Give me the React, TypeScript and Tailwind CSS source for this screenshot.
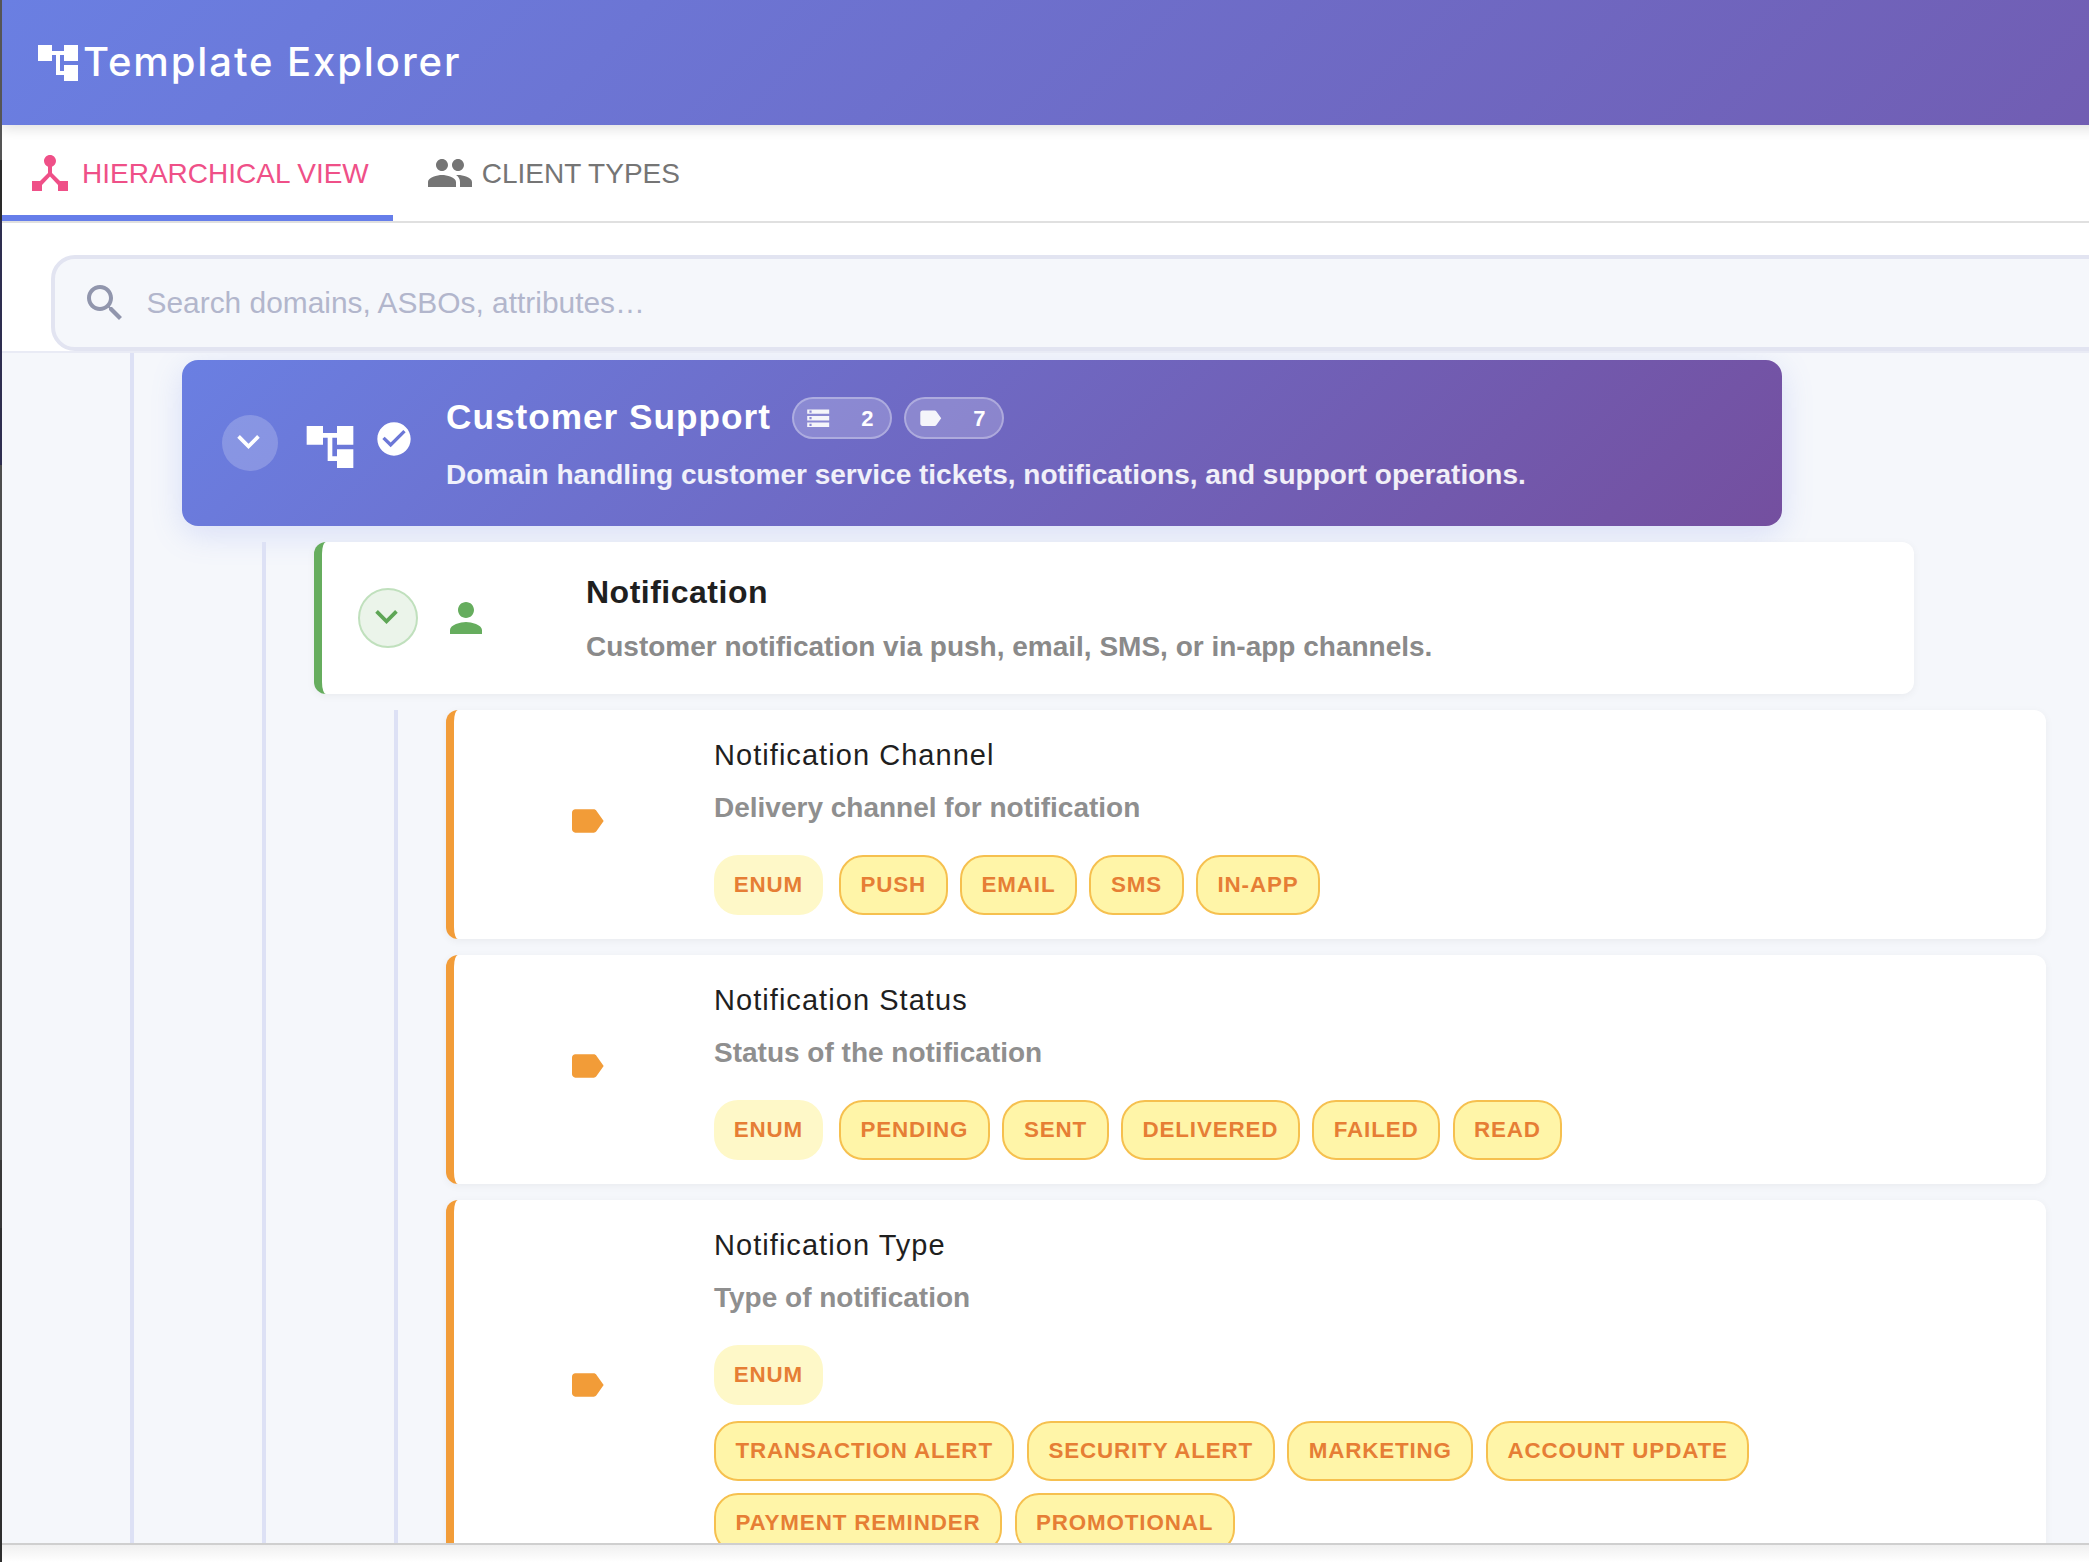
const ICONS = {
  tree: 'M22 11V3h-7v3H9V3H2v8h7V8h2v10h4v3h7v-8h-7v3h-2V8h2v3z',
  hub: 'm17 16-4-4V8.82C14.16 8.4 15 7.3 15 6c0-1.66-1.34-3-3-3S9 4.34 9 6c0 1.3.84 2.4 2 2.82V12l-4 4H3v5h5v-3.05l4-4.2 4 4.2V21h5v-5h-4z',
  people: 'M16 11c1.66 0 2.99-1.34 2.99-3S17.66 5 16 5c-1.66 0-3 1.34-3 3s1.34 3 3 3zm-8 0c1.66 0 2.99-1.34 2.99-3S9.66 5 8 5C6.34 5 5 6.34 5 8s1.34 3 3 3zm0 2c-2.33 0-7 1.17-7 3.5V19h14v-2.5c0-2.33-4.67-3.5-7-3.5zm8 0c-.29 0-.62.02-.97.05 1.16.84 1.97 1.97 1.97 3.45V19h6v-2.5c0-2.33-4.67-3.5-7-3.5z',
  search: 'M15.5 14h-.79l-.28-.27C15.41 12.59 16 11.11 16 9.5 16 5.91 13.09 3 9.5 3S3 5.91 3 9.5 5.91 16 9.5 16c1.61 0 3.09-.59 4.23-1.57l.27.28v.79l5 4.99L20.49 19l-4.99-5zm-6 0C7.01 14 5 11.99 5 9.5S7.01 5 9.5 5 14 7.01 14 9.5 11.99 14 9.5 14z',
  more: 'M16.59 8.59 12 13.17 7.41 8.59 6 10l6 6 6-6z',
  check: 'M12 2C6.48 2 2 6.48 2 12s4.48 10 10 10 10-4.48 10-10S17.52 2 12 2zm-2 15l-5-5 1.41-1.41L10 14.17l7.59-7.59L19 8l-9 9z',
  storage: 'M2 20h20v-4H2v4zm2-3h2v2H4v-2zM2 4v4h20V4H2zm4 3H4V5h2v2zm-4 7h20v-4H2v4zm2-3h2v2H4v-2z',
  label: 'M17.63 5.84C17.27 5.33 16.67 5 16 5L5 5.01C3.9 5.01 3 5.9 3 7v10c0 1.1.9 1.99 2 1.99L16 19c.67 0 1.27-.33 1.63-.84L22 12l-4.37-6.16z',
  person: 'M12 12c2.21 0 4-1.79 4-4s-1.79-4-4-4-4 1.79-4 4 1.79 4 4 4zm0 2c-2.67 0-8 1.34-8 4v2h16v-2c0-2.66-5.33-4-8-4z',
};

function Icon({ name, className }: { name: keyof typeof ICONS; className: string }) {
  return (
    <svg viewBox="0 0 24 24" fill="currentColor" className={`shrink-0 ${className}`}>
      <path d={ICONS[name]} />
    </svg>
  );
}

const ATTRIBUTES = [
  {
    name: 'Notification Channel',
    desc: 'Delivery channel for notification',
    values: ['PUSH', 'EMAIL', 'SMS', 'IN-APP'],
  },
  {
    name: 'Notification Status',
    desc: 'Status of the notification',
    values: ['PENDING', 'SENT', 'DELIVERED', 'FAILED', 'READ'],
  },
  {
    name: 'Notification Type',
    desc: 'Type of notification',
    values: ['TRANSACTION ALERT', 'SECURITY ALERT', 'MARKETING', 'ACCOUNT UPDATE', 'PAYMENT REMINDER', 'PROMOTIONAL'],
  },
];

function AttributeCard({ name, desc, values }: { name: string; desc: string; values: string[] }) {
  return (
    <div className="flex w-[1600px] items-center rounded-[12px] border-l-8 border-[#f29c38] bg-white py-[24px] pl-[113px] pr-[32px] shadow-[0_2px_8px_rgba(0,0,0,0.05)]">
      <Icon name="label" className="mb-[7px] h-[40px] w-[40px] text-[#f29c38]" />
      <div className="ml-[107px] min-w-0 flex-1">
        <div className="mt-[1px] h-[40px] text-[29px] leading-[40px] tracking-[1.05px] text-[#1f1f1f]">{name}</div>
        <div className="mt-[12px] h-[42px] text-[28px] font-bold leading-[42px] text-[#8f8f8f]">{desc}</div>
        <div className="mt-[26px] flex flex-wrap gap-[16px]">
          <span className="flex h-[60px] items-center rounded-[24px] bg-[#fef8c8] px-[19.8px] text-[22.4px] font-bold tracking-[0.85px] text-[#e67e35]">ENUM</span>
          <div className="flex flex-wrap gap-x-[12.5px] gap-y-[12px]">
            {values.map(v => (
              <span key={v} className="flex h-[60px] items-center rounded-[24px] border-2 border-[#f6c04f] bg-[#fff5a8] px-[19.5px] text-[22.4px] font-bold tracking-[0.85px] text-[#e67e35]">
                {v}
              </span>
            ))}
          </div>
        </div>
      </div>
    </div>
  );
}

export default function App() {
  return (
    <div className="flex h-screen w-screen overflow-hidden bg-white font-['Liberation_Sans',sans-serif]">
      {/* dark sliver of whatever sat behind the window */}
      <div className="flex w-[2px] shrink-0 flex-col">
        <div className="h-[160px] bg-[#555555]" />
        <div className="h-[60px] bg-[#2a2a2a]" />
        <div className="h-[245px] bg-[#2e2e50]" />
        <div className="h-[695px] bg-[#4d4d4d]" />
        <div className="h-[68px] bg-[#383838]" />
        <div className="flex-1 bg-[#2e2e2e]" />
      </div>

      <div className="flex min-w-0 flex-1 flex-col overflow-hidden">
        {/* app bar */}
        <div className="relative z-10 flex h-[125px] w-[3000px] shrink-0 items-center bg-[linear-gradient(135deg,#6a7fe2_0%,#744f9f_100%)] pl-[32px] shadow-[0_4px_12px_rgba(0,0,0,0.12)]">
          <Icon name="tree" className="h-[48px] w-[48px] text-white" />
          <span className="mb-[2px] ml-[1px] font-['Inter',sans-serif] text-[40px] font-medium tracking-[1.9px] text-white">Template Explorer</span>
        </div>

        {/* tabs */}
        <div className="flex h-[98px] shrink-0 border-b-2 border-[#e0e0e0] bg-white">
          <div className="flex h-[96px] items-center gap-[8px] border-b-[6px] border-[#667eea] px-[24px] pt-[6px] text-[28px] text-[#ef5088]">
            <Icon name="hub" className="h-[48px] w-[48px]" />
            <span className="pt-[2px]">HIERARCHICAL VIEW</span>
          </div>
          <div className="ml-[9px] flex h-[96px] items-center gap-[8px] px-[24px] text-[28px] text-[#757575]">
            <Icon name="people" className="h-[48px] w-[48px]" />
            <span className="pt-[2px]">CLIENT TYPES</span>
          </div>
        </div>

        {/* search */}
        <div className="h-[130px] shrink-0 border-b-2 border-[#e9ebf5] bg-white pl-[49px] pt-[32px]">
          <div className="flex h-[96px] w-[2300px] items-center rounded-[24px] border-4 border-[#e2e4f1] bg-[#f5f7fb] pl-[26px]">
            <Icon name="search" className="h-[48px] w-[48px] text-[#9196ad]" />
            <input
              readOnly
              placeholder="Search domains, ASBOs, attributes…"
              className="ml-[17.5px] flex-1 bg-transparent text-[29.9px] outline-none placeholder:text-[#b2b6cc]"
            />
          </div>
        </div>

        {/* tree */}
        <div className="min-h-0 flex-1 overflow-hidden border-b-2 border-[#cfcfcf] bg-[#f5f7fb] pl-[128px]">
          <div className="min-h-full border-l-4 border-[#dde1f5] pb-[40px] pl-[48px] pt-[7px]">
            <div className="flex h-[166px] w-[1600px] items-center rounded-[16px] bg-[linear-gradient(135deg,#6a7fe2_0%,#744f9f_100%)] pl-[40px] text-white shadow-[0_8px_32px_rgba(102,126,234,0.2)]">
              <div className="flex h-[56px] w-[56px] shrink-0 items-center justify-center rounded-full bg-white/20">
                <Icon name="more" className="mb-[4px] mr-[4px] h-[45px] w-[45px]" />
              </div>
              <Icon name="tree" className="ml-[24px] mt-[8px] h-[56px] w-[56px]" />
              <Icon name="check" className="mb-[8px] ml-[16px] h-[40px] w-[40px]" />
              <div className="ml-[32px] pt-[7px]">
                <div className="flex h-[42px] items-center">
                  <span className="mb-[2px] text-[35.2px] font-bold tracking-[1px]">Customer Support</span>
                  <div className="ml-[21px] flex gap-[12px]">
                    <div className="flex h-[42px] w-[100px] items-center rounded-full border-2 border-white/30 bg-white/20 pl-[11px]">
                      <Icon name="storage" className="h-[26.4px] w-[26.4px] text-[#f5f5fa]" />
                      <span className="ml-[30px] text-[22px] font-bold">2</span>
                    </div>
                    <div className="flex h-[42px] w-[100px] items-center rounded-full border-2 border-white/30 bg-white/20 pl-[11px]">
                      <Icon name="label" className="h-[26.4px] w-[26.4px] text-[#f5f5fa]" />
                      <span className="ml-[30px] text-[22px] font-bold">7</span>
                    </div>
                  </div>
                </div>
                <div className="mt-[15px] h-[42px] text-[28px] font-bold leading-[42px] text-white/90">
                  Domain handling customer service tickets, notifications, and support operations.
                </div>
              </div>
            </div>

            <div className="ml-[80px] mt-[16px] border-l-4 border-[#dde1f5] pl-[48px]">
              <div className="flex h-[152px] w-[1600px] items-center rounded-[12px] border-l-8 border-[#66ad5e] bg-white pl-[36px] shadow-[0_2px_8px_rgba(0,0,0,0.05)]">
                <div className="flex h-[60px] w-[60px] shrink-0 items-center justify-center rounded-full border-2 border-[#c0e0bd] bg-[#ebf4ea] text-[#5ea656]">
                  <Icon name="more" className="mb-[4px] mr-[4px] h-[45px] w-[45px]" />
                </div>
                <Icon name="person" className="ml-[24px] h-[48px] w-[48px] text-[#66ad5e]" />
                <div className="mb-[1px] ml-[96px]">
                  <div className="h-[48px] text-[32px] font-bold leading-[48px] tracking-[0.5px] text-[#1f1f1f]">Notification</div>
                  <div className="mt-[10px] h-[42px] text-[28px] font-bold leading-[42px] text-[#8a8a8a]">
                    Customer notification via push, email, SMS, or in-app channels.
                  </div>
                </div>
              </div>

              <div className="ml-[80px] mt-[16px] flex flex-col gap-[16px] border-l-4 border-[#dde1f5] pl-[48px]">
                {ATTRIBUTES.map(a => (
                  <AttributeCard key={a.name} name={a.name} desc={a.desc} values={a.values} />
                ))}
              </div>
            </div>
          </div>
        </div>

        <div className="h-[17px] shrink-0 bg-[linear-gradient(180deg,#f0f0f0,#ffffff)]" />
      </div>
    </div>
  );
}
